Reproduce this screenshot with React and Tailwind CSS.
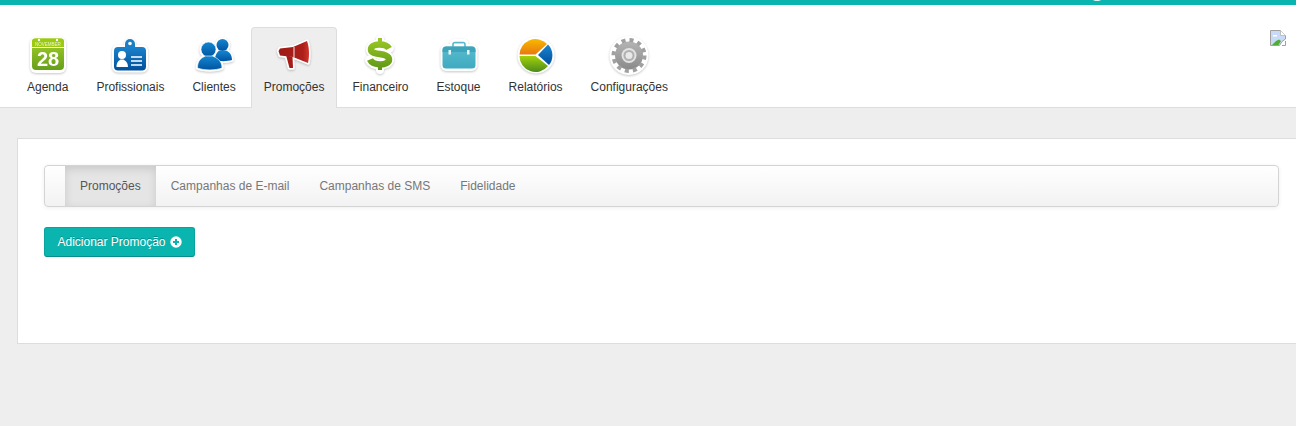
import React from "react";

const IconSvg = ({ children }) => (
  <svg width="40" height="40" viewBox="0 0 40 40" className="drop-shadow-[0_1px_1px_rgba(0,0,0,0.22)]">
    {children}
  </svg>
);

const CalendarIcon = () => (
  <IconSvg>
    <defs>
      <linearGradient id="calBody" x1="0" y1="0" x2="0" y2="1">
        <stop offset="0" stopColor="#a3d02a" />
        <stop offset="1" stopColor="#669e1a" />
      </linearGradient>
    </defs>
    <rect x="2" y="2" width="36" height="36" rx="6" fill="#fff" />
    <rect x="4" y="3.5" width="32" height="31.5" rx="4" fill="url(#calBody)" />
    <rect x="4" y="3.5" width="32" height="9" rx="3" fill="#9bcb0e" />
    <rect x="4" y="12" width="32" height="1" fill="#fff" />
    <circle cx="11" cy="5" r="1.2" fill="#fff" />
    <circle cx="29" cy="5" r="1.2" fill="#fff" />
    <text x="20" y="10.5" textAnchor="middle" fontSize="4.5" fontFamily="Liberation Sans" fill="#e9f5c8">NOVEMBER</text>
    <text x="20" y="31" textAnchor="middle" fontSize="20" fontWeight="700" fontFamily="Liberation Sans" fill="#fff">28</text>
  </IconSvg>
);

const BadgeIcon = () => (
  <IconSvg>
    <defs>
      <linearGradient id="badgeBody" x1="0" y1="0" x2="0" y2="1">
        <stop offset="0" stopColor="#1a82cb" />
        <stop offset="1" stopColor="#01509b" />
      </linearGradient>
    </defs>
    <rect x="2" y="9.5" width="36" height="28" rx="6" fill="#fff" />
    <circle cx="20" cy="9" r="6" fill="#fff" />
    <path d="M15 12 v-3 a5 5 0 0 1 10 0 v3 z" fill="#1a7fc6" />
    <circle cx="20" cy="8.5" r="1.8" fill="#fff" />
    <rect x="4" y="12" width="32" height="23.5" rx="4" fill="url(#badgeBody)" />
    <circle cx="12" cy="20" r="4" fill="#fff" />
    <path d="M6.5 32 c0-5 2.5-6.5 4-7.5 h3 c1.5 1 4.5 2.5 4.5 7.5 z" fill="#fff" />
    <path d="M21 22 h11 M21 26 h11 M21 30 h11" stroke="#fff" strokeWidth="1.7" />
  </IconSvg>
);

const PeopleIcon = () => (
  <IconSvg>
    <defs>
      <linearGradient id="peopleFill" x1="0" y1="0" x2="0" y2="1">
        <stop offset="0" stopColor="#1486d2" />
        <stop offset="1" stopColor="#01549f" />
      </linearGradient>
    </defs>
    <g fill="#fff" stroke="#fff" strokeWidth="3.5" strokeLinejoin="round">
      <circle cx="28.5" cy="10" r="6" />
      <path d="M21 25 c0-6 3-8 4-9.5 h7 c3 1.5 6 3.5 6 9.5 c-5 1.5-12.5 1.5-17 0 z" />
      <circle cx="14.5" cy="14.5" r="7.5" />
      <path d="M3.5 33 c0-8 4-10 8-12 h7 c4 2 9.5 4 9.5 12 c-6 2.5-18.5 2.5-24.5 0 z" />
    </g>
    <circle cx="28.5" cy="10" r="6" fill="url(#peopleFill)" />
    <path d="M21 25 c0-6 3-8 4-9.5 h7 c3 1.5 6 3.5 6 9.5 c-5 1.5-12.5 1.5-17 0 z" fill="url(#peopleFill)" />
    <circle cx="14.5" cy="14.5" r="7.5" fill="url(#peopleFill)" stroke="#fff" strokeWidth="0.6" />
    <path d="M3.5 33 c0-8 4-10 8-12 h7 c4 2 9.5 4 9.5 12 c-6 2.5-18.5 2.5-24.5 0 z" fill="url(#peopleFill)" stroke="#fff" strokeWidth="0.6" />
  </IconSvg>
);

const MegaphoneIcon = () => (
  <IconSvg>
    <defs>
      <linearGradient id="megaFill" x1="0" y1="0" x2="1" y2="0">
        <stop offset="0" stopColor="#9c1a16" />
        <stop offset="0.8" stopColor="#ad1f1a" />
        <stop offset="1" stopColor="#d0362e" />
      </linearGradient>
    </defs>
    <g fill="#fff" stroke="#fff" strokeWidth="3.5" strokeLinejoin="round">
      <path d="M4.5 16 L6 13.5 L19 12 L33 6 C35.5 12 35.5 22 34 28 L19 22 L6 20.5 Z" />
      <path d="M12 20 L18.5 22 L19 33 L15.5 33 Z" />
    </g>
    <path d="M4.5 16 L6 13.5 L19 12 L33 6 C35.5 12 35.5 22 34 28 L19 22 L6 20.5 Z" fill="url(#megaFill)" />
    <path d="M12 20 L18.5 22 L19 33 L15.5 33 Z" fill="#a51b17" />
    <path d="M20 12 V22.5" stroke="#fff" strokeWidth="0.9" />
  </IconSvg>
);

const DollarIcon = () => (
  <IconSvg>
    <defs>
      <linearGradient id="dollarFill" gradientUnits="userSpaceOnUse" x1="0" y1="2" x2="0" y2="36">
        <stop offset="0" stopColor="#9ccb24" />
        <stop offset="1" stopColor="#5d9417" />
      </linearGradient>
    </defs>
    <g fill="none" stroke="#fff" strokeWidth="10" strokeLinecap="round">
      <path d="M29 13 C26 8 11 8 11 14.5 C11 21 29 17 29 24.5 C29 31 13 31 10 25" />
      <path d="M20 4 V8 M20 31 V35" strokeWidth="8" />
    </g>
    <g fill="none" stroke="url(#dollarFill)" strokeWidth="6.5">
      <path d="M29 13.5 C26 8 11 8 11 14.5 C11 21 29 17 29 24.5 C29 31 13 31 10 24.5" />
      <path d="M20 3 V9 M20 29 V35" strokeWidth="4" />
    </g>
  </IconSvg>
);

const CaseIcon = () => (
  <IconSvg>
    <defs>
      <linearGradient id="caseFill" x1="0" y1="0" x2="0" y2="1">
        <stop offset="0" stopColor="#58bbce" />
        <stop offset="1" stopColor="#40aac0" />
      </linearGradient>
    </defs>
    <rect x="1.5" y="9" width="37" height="27" rx="6" fill="#fff" />
    <path d="M13 13 v-4 a3 3 0 0 1 3-3 h8 a3 3 0 0 1 3 3 v4" fill="none" stroke="#fff" strokeWidth="5" />
    <path d="M14 13 v-3.5 a2 2 0 0 1 2-2 h8 a2 2 0 0 1 2 2 v3.5" fill="none" stroke="#58b7ca" strokeWidth="1.6" />
    <rect x="3.5" y="11.5" width="33" height="22" rx="3.5" fill="url(#caseFill)" />
    <path d="M3.5 15 a3.5 3.5 0 0 1 3.5-3.5 h26 a3.5 3.5 0 0 1 3.5 3.5 v2 h-33 z" fill="#3ea4ba" />
    <rect x="9.5" y="15" width="2.5" height="4.5" fill="#e6f6f9" />
    <rect x="28" y="15" width="2.5" height="4.5" fill="#e6f6f9" />
  </IconSvg>
);

const PieIcon = () => (
  <IconSvg>
    <defs>
      <linearGradient id="pieTop" x1="0" y1="0" x2="0" y2="1">
        <stop offset="0" stopColor="#f8b900" />
        <stop offset="1" stopColor="#e9780e" />
      </linearGradient>
      <linearGradient id="pieBottom" x1="0" y1="0" x2="0" y2="1">
        <stop offset="0" stopColor="#a3d20a" />
        <stop offset="1" stopColor="#4d8a1c" />
      </linearGradient>
      <linearGradient id="pieBlue" x1="0" y1="0" x2="0" y2="1">
        <stop offset="0" stopColor="#1a85d0" />
        <stop offset="1" stopColor="#004f9c" />
      </linearGradient>
    </defs>
    <circle cx="20" cy="20" r="18.5" fill="#fff" />
    <path d="M19.5 19.5 L31 9 A16 16 0 0 0 3.5 19.5 Z" fill="url(#pieTop)" />
    <path d="M3.5 21 L19.5 21 L32 31 A16 16 0 0 1 3.5 21 Z" fill="url(#pieBottom)" />
    <path d="M22 20 L32 9.5 A15.5 15.5 0 0 1 33 30 Z" fill="url(#pieBlue)" />
  </IconSvg>
);

const GearIcon = () => (
  <IconSvg>
    <defs>
      <linearGradient id="gearFill" x1="0" y1="0" x2="0" y2="1">
        <stop offset="0" stopColor="#b4b4b4" />
        <stop offset="1" stopColor="#8a8a8a" />
      </linearGradient>
    </defs>
    <circle cx="20" cy="20.5" r="19.5" fill="#fff" />
    <circle cx="20" cy="20.5" r="14" fill="url(#gearFill)" />
    <circle cx="20" cy="20.5" r="15.5" fill="none" stroke="#a0a0a0" strokeWidth="4" strokeDasharray="4.06 4.06" />
    <circle cx="20" cy="20.5" r="7.5" fill="#e2e2e2" />
    <circle cx="20" cy="20.5" r="5.5" fill="#b0b0b0" />
    <circle cx="20" cy="20.5" r="3.5" fill="#e8e8e8" />
  </IconSvg>
);

const BrokenImage = () => (
  <svg width="16" height="16" viewBox="0 0 16 16">
    <path d="M0.5 0.5 H10.5 L15.5 5.5 V9 L12 11.5 L9.5 15.5 H0.5 Z" fill="#c9daf8" stroke="#a0a0a0" />
    <path d="M10.5 0.5 V5.5 H15.5" fill="#fff" stroke="#c0c0c0" />
    <path d="M3 5 h4 v1.5 h-4 z" fill="#fff" />
    <path d="M2 15 L6 11 L9 9.5 L11 11 L8.5 15 Z" fill="#4caf32" />
    <path d="M15.5 11 V15.5 H12" fill="none" stroke="#a0a0a0" />
  </svg>
);

const menu = [
  { label: "Agenda", icon: <CalendarIcon /> },
  { label: "Profissionais", icon: <BadgeIcon /> },
  { label: "Clientes", icon: <PeopleIcon /> },
  { label: "Promoções", icon: <MegaphoneIcon />, active: true },
  { label: "Financeiro", icon: <DollarIcon /> },
  { label: "Estoque", icon: <CaseIcon /> },
  { label: "Relatórios", icon: <PieIcon /> },
  { label: "Configurações", icon: <GearIcon /> },
];

const subMenu = ["Promoções", "Campanhas de E-mail", "Campanhas de SMS", "Fidelidade"];

const App = () => {
  return (
    <div className="h-[426px] overflow-hidden bg-[#eeeeee] font-['Liberation_Sans',Arial,sans-serif] text-xs">
      <div className="relative h-[5px] overflow-hidden bg-[#0ab5b0]">
        <div className="absolute left-[1091px] top-[-9px] h-[10px] w-[12px] rounded-full bg-[#dff3f2]" />
      </div>

      {/* top menu */}
      <div className="flex h-[103px] justify-between border-b border-[#dddddd] bg-white pl-[13px] pr-[10px]">
        <ul className="mt-[22px] flex">
          {menu.map((item) => (
            <li
              key={item.label}
              className={
                item.active
                  ? "-mb-px mx-[1px] flex h-[81px] flex-col items-center rounded-t border border-b-0 border-[#dddddd] bg-[#eeeeee] px-[12px] pt-[7px] text-[#333333]"
                  : "flex h-[80px] flex-col items-center border border-transparent px-[13px] pt-[7px] text-[#333333]"
              }
            >
              {item.icon}
              <span className="mt-[5px] leading-[14px] whitespace-nowrap">{item.label}</span>
            </li>
          ))}
        </ul>
        <div className="mt-[25px]">
          <BrokenImage />
        </div>
      </div>

      {/* content card */}
      <div className="ml-[17px] mt-[30px] h-[206px] w-[1300px] border border-[#dddddd] bg-white pl-[26px] pt-[26px]">
        <div className="flex h-[42px] w-[1235px] rounded border border-[#d4d4d4] bg-gradient-to-b from-white to-[#f2f2f2] pl-[20px] shadow-[0_1px_4px_rgba(0,0,0,0.07)]">
          {subMenu.map((label, i) => (
            <a
              key={label}
              className={
                i === 0
                  ? "flex items-center bg-[#e5e5e5] px-[15px] text-[#555555] shadow-[inset_0_3px_8px_rgba(0,0,0,0.125)]"
                  : "flex items-center px-[15px] text-[#777777]"
              }
            >
              {label}
            </a>
          ))}
        </div>

        <button className="mt-[20px] flex h-[30px] w-[151px] items-center justify-center gap-[4px] rounded-[3px] border border-[#09a29d] border-b-[#078e8a] bg-[#0ab5b0] font-['Liberation_Sans',Arial,sans-serif] text-xs text-white [text-shadow:0_-1px_0_rgba(0,0,0,0.25)]">
          Adicionar Promoção
          <svg width="12" height="12" viewBox="0 0 12 12">
            <circle cx="6" cy="6" r="5.7" fill="#fff" />
            <path d="M6 3 V9 M3 6 H9" stroke="#0ab5b0" strokeWidth="2" />
          </svg>
        </button>
      </div>
    </div>
  );
};

export default App;
